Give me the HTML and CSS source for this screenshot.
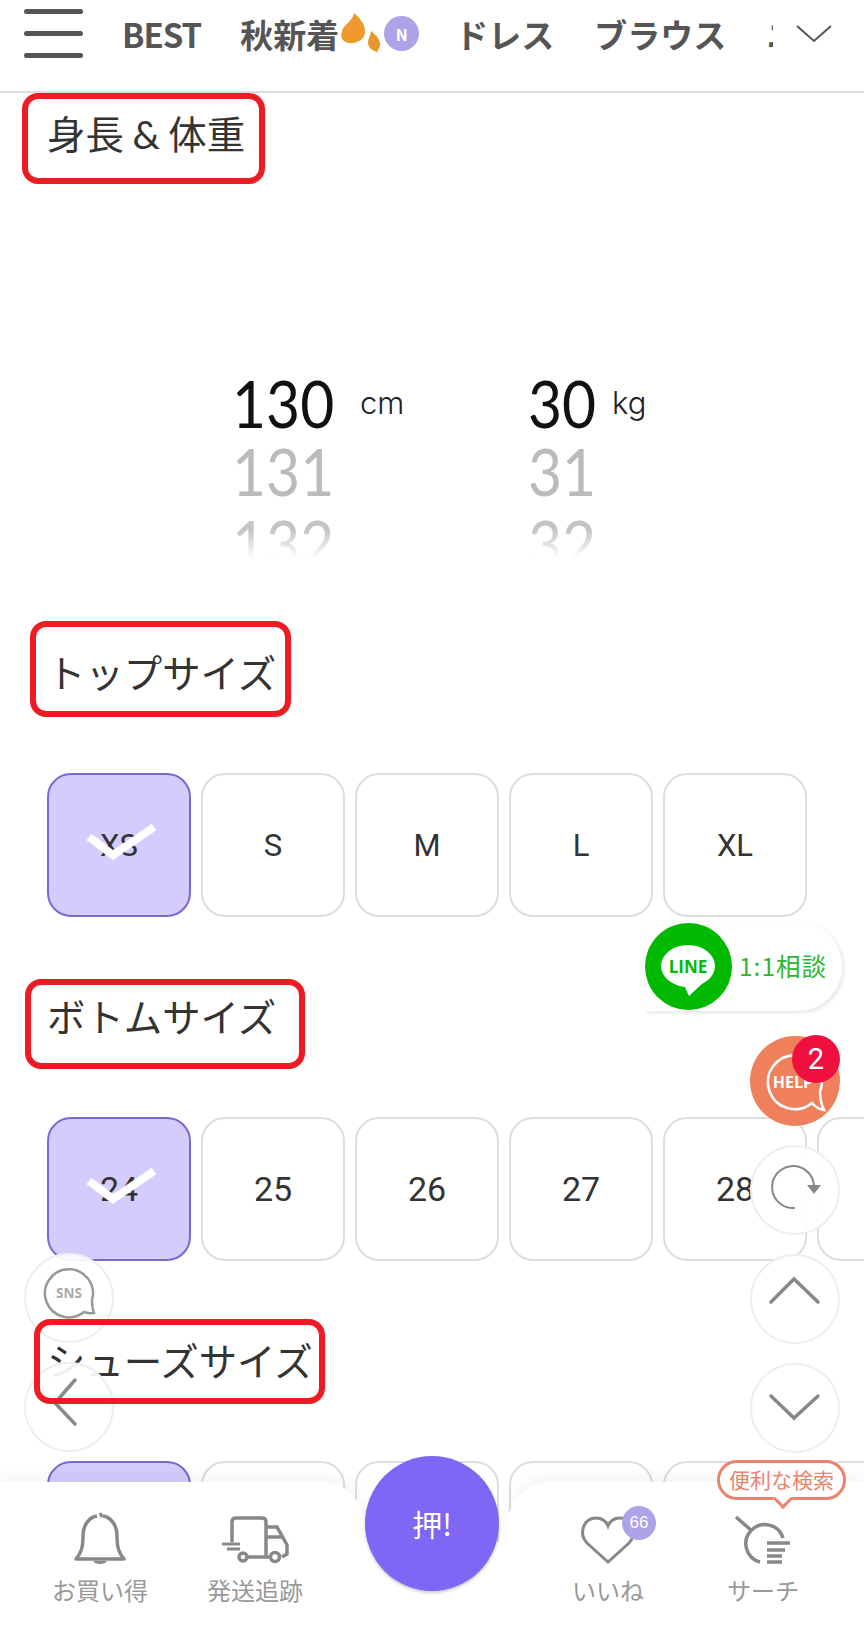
FILE: index.html
```html
<!DOCTYPE html>
<html lang="ja">
<head>
    <meta charset="UTF-8">
    <meta name="viewport" content="width=device-width, initial-scale=1.0">
    <title>サイズ選択</title>
    <link rel="stylesheet" href="styles.css">
</head>
<body>
    <!-- Header Section -->
    <header class="top-bar">
        <div class="hamburger"><span></span><span></span><span></span></div>
        <nav class="tabs">
            <a class="tab-latin">BEST</a>
            <a class="tab-new">秋新着
                <svg class="leaves" width="44" height="40" viewBox="0 0 44 40">
                    <path d="M15 0C21 5 27 12 26 20C25 27 17 31 10 30C3 29 1 24 3 18C5 11 14 8 15 0Z" fill="#ef9a2e"/>
                    <path d="M32 18C37 22 42 27 41 33C40 36 39 37 38 38L39 40L36 38C32 37 29 34 29 29C29 25 32 22 32 18Z" fill="#e8962c"/>
                </svg>
                <span class="new-badge">N</span>
            </a>
            <a>ドレス</a>
            <a>ブラウス</a>
            <a>ニット</a>
        </nav>
        <svg class="tabs-more" width="36" height="18" viewBox="0 0 36 18"><path d="M1 1L18 16L35 1" fill="none" stroke="#555" stroke-width="2"/></svg>
    </header>

    <!-- Main Section -->
    <main>
        <h2 class="heading">身長 <span class="amp">&amp;</span> 体重<span class="mark mark-body"></span></h2>

        <div class="picker">
            <div class="wheel">
                <div class="wheel-nums">
                    <div class="num-now">130</div>
                    <div class="num-next">131</div>
                    <div class="num-fade">132</div>
                </div>
                <div class="unit unit-cm">cm</div>
            </div>
            <div class="wheel">
                <div class="wheel-nums">
                    <div class="num-now">30</div>
                    <div class="num-next">31</div>
                    <div class="num-fade">32</div>
                </div>
                <div class="unit unit-kg">kg</div>
            </div>
        </div>

        <h2 class="heading heading-size">トップサイズ<span class="mark mark-top"></span></h2>
        <div class="size-row">
            <div class="size-btn selected">XS<svg class="check" width="72" height="40" viewBox="0 0 72 40"><path d="M4 14L28 32L69 4" fill="none" stroke="#fff" stroke-width="8"/></svg></div>
            <div class="size-btn">S</div>
            <div class="size-btn">M</div>
            <div class="size-btn">L</div>
            <div class="size-btn">XL</div>
        </div>

        <h2 class="heading heading-size">ボトムサイズ<span class="mark mark-bottom"></span></h2>
        <div class="size-row size-row-num">
            <div class="size-btn selected">24<svg class="check" width="72" height="40" viewBox="0 0 72 40"><path d="M4 14L28 32L69 4" fill="none" stroke="#fff" stroke-width="8"/></svg></div>
            <div class="size-btn">25</div>
            <div class="size-btn">26</div>
            <div class="size-btn">27</div>
            <div class="size-btn">28</div>
            <div class="size-btn"></div>
        </div>

        <h2 class="heading heading-size">シューズサイズ<span class="mark mark-shoes"></span></h2>
        <div class="size-row">
            <div class="size-btn selected"></div>
            <div class="size-btn"></div>
            <div class="size-btn"></div>
            <div class="size-btn"></div>
            <div class="size-btn"></div>
            <div class="size-btn"></div>
        </div>
    </main>

    <!-- Floating buttons -->
    <div class="line-pill">
        <svg class="line-icon" width="87" height="87" viewBox="0 0 87 87">
            <circle cx="43.5" cy="43.5" r="43.5" fill="#00b900"/>
            <ellipse cx="43" cy="43" rx="27" ry="21" fill="#fff"/>
            <path d="M38 60L44 73L60 58Z" fill="#fff"/>
            <text x="43" y="50" text-anchor="middle" class="line-text">LINE</text>
        </svg>
        <span class="line-label">1:1相談</span>
    </div>

    <div class="float-stack stack-right">
        <div class="round round-help">
            <svg width="90" height="90" viewBox="0 0 90 90">
                <path d="M62 67A27 27 0 1 1 70 56C70 62 71 68 74 74C69 73 65 71 62 67Z" fill="none" stroke="#fff" stroke-width="2.5"/>
                <text x="43" y="52" text-anchor="middle" class="help-text">HELP</text>
            </svg>
            <span class="help-count">2</span>
        </div>
        <div class="round">
            <svg width="90" height="90" viewBox="0 0 90 90">
                <path d="M45 63A21 21 0 1 1 64 40" fill="none" stroke="#888" stroke-width="2"/>
                <path d="M57 40H71L64 49Z" fill="#888"/>
            </svg>
        </div>
        <div class="round">
            <svg width="90" height="90" viewBox="0 0 90 90"><path d="M21 48L44 25L68 48" class="chev"/></svg>
        </div>
        <div class="round">
            <svg width="90" height="90" viewBox="0 0 90 90"><path d="M21 33L44 55L68 33" class="chev"/></svg>
        </div>
    </div>

    <div class="float-stack stack-left">
        <div class="round">
            <svg width="90" height="90" viewBox="0 0 90 90">
                <path d="M60 59A24 24 0 1 1 68 47C68 51 68 55 70 60C66 61 63 60 60 59Z" fill="none" stroke="#999" stroke-width="2.5"/>
                <text x="45" y="45" text-anchor="middle" class="sns-text">SNS</text>
            </svg>
        </div>
        <div class="round">
            <svg width="90" height="90" viewBox="0 0 90 90"><path d="M51 18L31 41L51 62" class="chev"/></svg>
        </div>
    </div>

    <!-- Bottom nav -->
    <footer class="bottom-nav">
        <div class="nav-side nav-left">
            <div class="nav-item">
                <svg width="52" height="52" viewBox="0 0 52 52" class="nav-icon">
                    <path d="M29 4C36 5 43 12 43 24C43 36 45 41 50 47H2C7 41 9 36 9 24C9 12 16 5 23 4" fill="none" stroke="#888" stroke-width="3.5" stroke-linejoin="round"/>
                    <path d="M26 1L28 5" stroke="#888" stroke-width="3"/>
                    <path d="M19 49C21 53 31 53 33 49Z" fill="#888"/>
                </svg>
                <span>お買い得</span>
            </div>
            <div class="nav-item">
                <svg width="68" height="52" viewBox="0 -4 68 52" class="nav-icon">
                    <path d="M11 26V6Q11 2 15 2H41Q45 2 45 6V41M27 41H49M45 11H56L66 29V38L61 41M45 21H61" fill="none" stroke="#888" stroke-width="3.5"/>
                    <path d="M1 28H19M6 33H19" stroke="#888" stroke-width="3"/>
                    <circle cx="22" cy="41" r="4" fill="none" stroke="#888" stroke-width="3.5"/>
                    <circle cx="54" cy="41" r="4.5" fill="none" stroke="#888" stroke-width="3.5"/>
                </svg>
                <span>発送追跡</span>
            </div>
        </div>
        <div class="nav-mid"></div>
        <div class="nav-side nav-right">
            <div class="nav-item">
                <svg width="54" height="52" viewBox="0 -4 54 52" class="nav-icon">
                    <path d="M27 46L6 27C-3 17 3 2 15 2C21 2 25 5 27 10C29 5 33 2 39 2C51 2 57 17 48 27Z" fill="none" stroke="#888" stroke-width="3"/>
                </svg>
                <span class="like-count">66</span>
                <span>いいね</span>
            </div>
            <div class="nav-item">
                <div class="search-tip">便利な検索</div>
                <svg width="56" height="52" viewBox="0 -4 56 52" class="nav-icon">
                    <path d="M1 1L17 15" stroke="#888" stroke-width="3.5"/>
                    <path d="M48 22A19 19 0 1 0 25 46" fill="none" stroke="#888" stroke-width="3.5"/>
                    <path d="M32 27H55M32 34H50M32 40H47M32 46H47" stroke="#888" stroke-width="3.5"/>
                </svg>
                <span>サーチ</span>
            </div>
        </div>
    </footer>
    <div class="push-btn">押!</div>
</body>
</html>
```

FILE: styles.css
```css
/* General Reset */
* {
    margin: 0;
    padding: 0;
    box-sizing: border-box;
}

body {
    position: relative;
    width: 864px;
    height: 1644px;
    overflow: hidden;
    background: white;
    color: #333;
    font-family: "Noto Sans CJK JP", "Noto Sans", sans-serif;
}

/* Header */
.top-bar {
    display: flex;
    align-items: center;
    height: 93px;
    padding: 0 32px 24px 24px;
    border-bottom: 2px solid #ddd;
}

.hamburger {
    display: flex;
    flex-direction: column;
    justify-content: space-between;
    width: 59px;
    height: 49px;
}

.hamburger span {
    height: 5px;
    border-radius: 3px;
    background: #555;
}

.tabs {
    display: flex;
    align-items: center;
    gap: 40px;
    width: 651px;
    margin-left: 39px;
    overflow: hidden;
    white-space: nowrap;
}

.tabs a {
    display: flex;
    align-items: center;
    font-size: 33px;
    font-weight: bold;
    color: #555;
}

.tabs .tab-latin {
    margin-right: -1px;
    letter-spacing: -1px;
}

.tabs .tab-new {
    margin-right: -4px;
}

.leaves {
    margin-top: -2px;
}

.new-badge {
    display: flex;
    align-items: center;
    justify-content: center;
    width: 35px;
    height: 35px;
    margin-left: 1px;
    border-radius: 50%;
    background: #ada3e8;
    color: white;
    font-size: 16px;
}

.tabs-more {
    margin-left: 23px;
}

/* Main Section */
main {
    height: 1551px;
    overflow: hidden;
}

.heading {
    position: relative;
    height: 50px;
    margin: 16px 0 0 47px;
    font-size: 38.4px;
    font-weight: normal;
    line-height: 46px;
    white-space: nowrap;
}

.heading-size {
    margin-top: 75px;
    margin-bottom: 75px;
}

.amp {
    font-family: Lato, sans-serif;
}

.mark {
    position: absolute;
    z-index: 30;
    border: 6px solid #ed1c24;
    border-radius: 16px;
}

.mark-body {
    top: -16px;
    left: -25px;
    width: 243px;
    height: 91px;
}

.mark-top {
    top: -27px;
    left: -17px;
    width: 261px;
    height: 96px;
}

.mark-bottom {
    top: -13px;
    left: -22px;
    width: 280px;
    height: 90px;
}

.mark-shoes {
    top: -17px;
    left: -13px;
    width: 291px;
    height: 85px;
}

/* Height and weight wheels */
.picker {
    display: flex;
    margin: 210px 0 0 232px;
}

.wheel {
    display: flex;
}

.wheel-nums {
    width: 128px;
    font-family: Lato, sans-serif;
    font-size: 66px;
    line-height: 68px;
}

.wheel + .wheel .wheel-nums {
    width: 84px;
}

.wheel-nums div {
    transform: scaleX(0.89);
    transform-origin: left;
}

.num-now {
    color: #111;
}

.num-next {
    color: #bbb;
}

.wheel-nums .num-fade {
    margin: 4px 0 -4px;
    color: #c4c4c4;
    -webkit-mask-image: linear-gradient(#000 30%, transparent 72%);
    mask-image: linear-gradient(#000 30%, transparent 72%);
}

.unit {
    font-family: Inter, sans-serif;
    font-size: 31px;
    font-weight: 300;
    line-height: 68px;
    color: #222;
}

.unit-cm {
    width: 168px;
}

/* Size buttons */
.size-row {
    display: flex;
    gap: 10px;
    margin-left: 47px;
}

.size-btn {
    position: relative;
    display: flex;
    flex: none;
    align-items: center;
    justify-content: center;
    width: 144px;
    height: 144px;
    border: 2px solid #ddd;
    border-radius: 24px;
    font-family: Roboto, sans-serif;
    font-size: 31px;
}

.size-row-num .size-btn {
    font-size: 34px;
}

.size-btn.selected {
    border-color: #7b68d0;
    background: #d5ccfd;
}

.check {
    position: absolute;
    top: 48px;
    left: 36px;
}

/* Floating buttons */
.line-pill {
    position: absolute;
    z-index: 20;
    top: 922px;
    left: 645px;
    display: flex;
    align-items: center;
    width: 197px;
    height: 89px;
    border-radius: 0 44px 44px 0;
    background: white;
    box-shadow: 2px 2px 4px rgba(0, 0, 0, 0.1);
}

.line-icon {
    flex: none;
}

.line-text {
    fill: #00b900;
    font-family: "Open Sans", sans-serif;
    font-size: 17px;
    font-weight: bold;
}

.line-label {
    margin-left: 7px;
    margin-top: -3px;
    font-size: 24.5px;
    color: #2fb52f;
    white-space: nowrap;
    letter-spacing: 1px;
}

.float-stack {
    position: absolute;
    z-index: 20;
    display: flex;
    flex-direction: column;
    gap: 19px;
}

.stack-right {
    top: 1036px;
    left: 750px;
}

.stack-left {
    top: 1253px;
    left: 24px;
}

.round {
    position: relative;
    width: 90px;
    height: 90px;
    border: 2px solid #eee;
    border-radius: 50%;
    background: rgba(255, 255, 255, 0.92);
}

.round svg {
    display: block;
    margin: -2px;
}

.round-help {
    border: none;
    background: #f07f5c;
}

.round-help svg {
    margin: 0;
}

.help-text {
    fill: white;
    font-family: "Open Sans", sans-serif;
    font-size: 16px;
    font-weight: bold;
}

.help-count {
    position: absolute;
    top: -1px;
    right: 0;
    width: 48px;
    height: 48px;
    border-radius: 50%;
    background: #f0103f;
    color: white;
    font-family: Roboto, sans-serif;
    font-size: 29px;
    line-height: 48px;
    text-align: center;
}

.sns-text {
    fill: #aaa;
    font-family: "Open Sans", sans-serif;
    font-size: 13.5px;
    font-weight: bold;
}

.chev {
    fill: none;
    stroke: #888;
    stroke-width: 3.5;
    stroke-linecap: round;
}

/* Bottom nav */
.bottom-nav {
    position: absolute;
    z-index: 25;
    left: 0;
    bottom: 0;
    display: flex;
    width: 864px;
    height: 162px;
}

.nav-side {
    display: flex;
    flex: none;
    gap: 45px;
    padding-top: 30px;
    background: white;
    box-shadow: 0 -8px 16px rgba(0, 0, 0, 0.04);
}

.nav-left {
    width: 365px;
    padding-left: 45px;
    border-radius: 0 44px 0 0;
}

.nav-mid {
    position: relative;
    z-index: 1;
    flex: none;
    width: 142px;
    margin-top: 60px;
    background: white;
}

.nav-right {
    width: 357px;
    padding-left: 46px;
    border-radius: 44px 0 0 0;
}

.nav-item {
    position: relative;
    display: flex;
    flex-direction: column;
    align-items: center;
    width: 110px;
    font-size: 24px;
    color: #999;
    white-space: nowrap;
}

.nav-icon {
    display: block;
    margin-bottom: 8px;
}

.like-count {
    position: absolute;
    top: -6px;
    left: 69px;
    width: 34px;
    height: 34px;
    border-radius: 50%;
    background: #ada3e8;
    color: white;
    font-family: "Liberation Sans", sans-serif;
    font-size: 17px;
    line-height: 34px;
    text-align: center;
}

.search-tip {
    position: absolute;
    top: -52px;
    left: 9px;
    width: 129px;
    height: 40px;
    border: 3px solid #e8836e;
    border-radius: 20px;
    background: white;
    color: #e8836e;
    font-size: 21px;
    line-height: 33px;
    text-align: center;
}

.search-tip::after {
    content: "";
    position: absolute;
    left: 56px;
    bottom: -9px;
    width: 11px;
    height: 11px;
    border-right: 3px solid #e8836e;
    border-bottom: 3px solid #e8836e;
    background: white;
    transform: rotate(45deg);
}

.push-btn {
    position: absolute;
    z-index: 26;
    top: 1456px;
    left: 365px;
    width: 134px;
    height: 135px;
    border-radius: 50%;
    background: #7f66f5;
    box-shadow: 0 2px 3px rgba(0, 0, 0, 0.2);
    color: white;
    font-size: 30px;
    line-height: 135px;
    text-align: center;
}
```
